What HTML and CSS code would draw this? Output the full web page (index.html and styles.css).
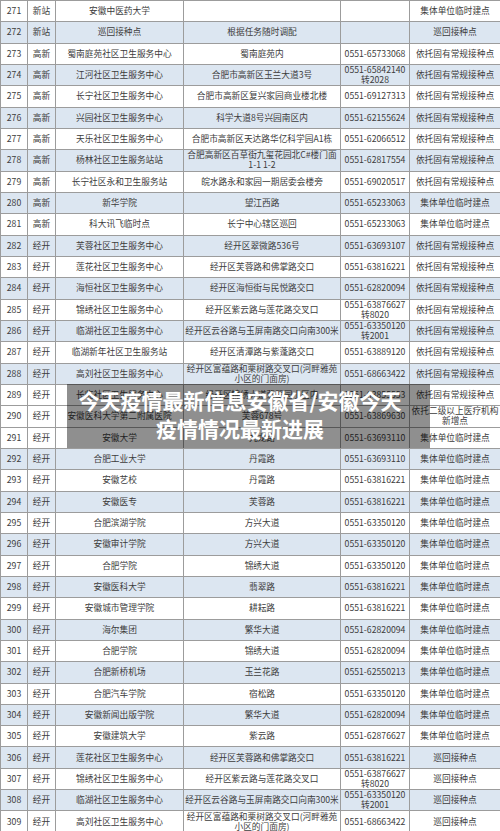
FILE: index.html
```html
<!DOCTYPE html>
<html lang="zh-CN">
<head>
<meta charset="utf-8">
<title>今天疫情最新信息安徽省/安徽今天疫情情况最新进展</title>
<link rel="stylesheet" href="styles.css">
</head>
<body>
<div class="page">
<table class="sites">
<colgroup>
<col class="c-no"><col class="c-area"><col class="c-name"><col class="c-addr"><col class="c-tel"><col class="c-type">
</colgroup>
<tbody>
<tr><td>271</td><td>新站</td><td>安徽中医药大学</td><td></td><td></td><td>集体单位临时建点</td></tr>
<tr class="alt"><td>272</td><td>新站</td><td>巡回接种点</td><td>根据任务随时调配</td><td></td><td>巡回接种点</td></tr>
<tr><td>273</td><td>高新</td><td>蜀南庭苑社区卫生服务中心</td><td>蜀南庭苑内</td><td>0551-65733068</td><td>依托固有常规接种点</td></tr>
<tr class="alt"><td>274</td><td>高新</td><td>江河社区卫生服务中心</td><td>合肥市高新区玉兰大道3号</td><td>0551-65842140<br>转2028</td><td>依托固有常规接种点</td></tr>
<tr><td>275</td><td>高新</td><td>长宁社区卫生服务中心</td><td>合肥市高新区复兴家园商业楼北楼</td><td>0551-69127313</td><td>依托固有常规接种点</td></tr>
<tr class="alt"><td>276</td><td>高新</td><td>兴园社区卫生服务中心</td><td>科学大道8号兴园南区内</td><td>0551-62155624</td><td>依托固有常规接种点</td></tr>
<tr><td>277</td><td>高新</td><td>天乐社区卫生服务中心</td><td>合肥市高新区天达路华亿科学园A1栋</td><td>0551-62066512</td><td>依托固有常规接种点</td></tr>
<tr class="alt"><td>278</td><td>高新</td><td>杨林社区卫生服务站站</td><td>合肥高新区百草街九玺花园北C#楼门面<br>1-1 1-2</td><td>0551-62817554</td><td>依托固有常规接种点</td></tr>
<tr><td>279</td><td>高新</td><td>长宁社区永和卫生服务站</td><td>皖水路永和家园一期居委会楼旁</td><td>0551-69020517</td><td>依托固有常规接种点</td></tr>
<tr class="alt"><td>280</td><td>高新</td><td>新华学院</td><td>望江西路</td><td>0551-65233063</td><td>集体单位临时建点</td></tr>
<tr><td>281</td><td>高新</td><td>科大讯飞临时点</td><td>长宁中心辖区巡回</td><td>0551-65233063</td><td>集体单位临时建点</td></tr>
<tr class="alt"><td>282</td><td>经开</td><td>芙蓉社区卫生服务中心</td><td>经开区翠微路536号</td><td>0551-63693107</td><td>依托固有常规接种点</td></tr>
<tr><td>283</td><td>经开</td><td>莲花社区卫生服务中心</td><td>经开区芙蓉路和佛掌路交口</td><td>0551-63816221</td><td>依托固有常规接种点</td></tr>
<tr class="alt"><td>284</td><td>经开</td><td>海恒社区卫生服务中心</td><td>经开区海恒街与民悦路交口</td><td>0551-62820094</td><td>依托固有常规接种点</td></tr>
<tr><td>285</td><td>经开</td><td>锦绣社区卫生服务中心</td><td>经开区紫云路与莲花路交叉口</td><td>0551-63876627<br>转8020</td><td>依托固有常规接种点</td></tr>
<tr class="alt"><td>286</td><td>经开</td><td>临湖社区卫生服务中心</td><td>经开区云谷路与玉屏南路交口向南300米</td><td>0551-63350120<br>转2001</td><td>依托固有常规接种点</td></tr>
<tr><td>287</td><td>经开</td><td>临湖新年社区卫生服务站</td><td>经开区清潭路与紫蓬路交口</td><td>0551-63889120</td><td>依托固有常规接种点</td></tr>
<tr class="alt"><td>288</td><td>经开</td><td>高刘社区卫生服务中心</td><td>经开区富蕴路和栗树路交叉口(河畔雅苑<br>小区的门面房)</td><td>0551-68663422</td><td>依托固有常规接种点</td></tr>
<tr><td>289</td><td>经开</td><td>长临社区卫生服务中心</td><td>经开区锦绣大道翡翠园小区内</td><td>0551-63855553</td><td>依托固有常规接种点</td></tr>
<tr><td>290</td><td>经开</td><td>安徽医科大学第二附属医院</td><td>芙蓉678号</td><td>0551-63869630</td><td>依托二级以上医疗机构<br>新增点</td></tr>
<tr><td>291</td><td>经开</td><td>安徽大学</td><td>九龙路</td><td>0551-63693110</td><td>集体单位临时建点</td></tr>
<tr class="alt"><td>292</td><td>经开</td><td>合肥工业大学</td><td>丹霞路</td><td>0551-63693110</td><td>集体单位临时建点</td></tr>
<tr><td>293</td><td>经开</td><td>安徽艺校</td><td>丹霞路</td><td>0551-63816221</td><td>集体单位临时建点</td></tr>
<tr class="alt"><td>294</td><td>经开</td><td>安徽医专</td><td>芙蓉路</td><td>0551-63816221</td><td>集体单位临时建点</td></tr>
<tr><td>295</td><td>经开</td><td>合肥滨湖学院</td><td>方兴大道</td><td>0551-63350120</td><td>集体单位临时建点</td></tr>
<tr class="alt"><td>296</td><td>经开</td><td>安徽审计学院</td><td>方兴大道</td><td>0551-63350120</td><td>集体单位临时建点</td></tr>
<tr><td>297</td><td>经开</td><td>合肥学院</td><td>锦绣大道</td><td>0551-63350120</td><td>集体单位临时建点</td></tr>
<tr class="alt"><td>298</td><td>经开</td><td>安徽医科大学</td><td>翡翠路</td><td>0551-63816221</td><td>集体单位临时建点</td></tr>
<tr><td>299</td><td>经开</td><td>安徽城市管理学院</td><td>耕耘路</td><td>0551-63816221</td><td>集体单位临时建点</td></tr>
<tr class="alt"><td>300</td><td>经开</td><td>海尔集团</td><td>繁华大道</td><td>0551-62820094</td><td>集体单位临时建点</td></tr>
<tr><td>301</td><td>经开</td><td>合肥学院</td><td>锦绣大道</td><td>0551-62820094</td><td>集体单位临时建点</td></tr>
<tr class="alt"><td>302</td><td>经开</td><td>合肥新桥机场</td><td>玉兰花路</td><td>0551-62550213</td><td>集体单位临时建点</td></tr>
<tr><td>303</td><td>经开</td><td>合肥汽车学院</td><td>宿松路</td><td>0551-63350120</td><td>集体单位临时建点</td></tr>
<tr class="alt"><td>304</td><td>经开</td><td>安徽新闻出版学院</td><td>繁华大道</td><td>0551-62820094</td><td>集体单位临时建点</td></tr>
<tr><td>305</td><td>经开</td><td>安徽建筑大学</td><td>紫云路</td><td>0551-62876627</td><td>集体单位临时建点</td></tr>
<tr class="alt"><td>306</td><td>经开</td><td>莲花社区卫生服务中心</td><td>经开区芙蓉路和佛掌路交口</td><td>0551-63816221</td><td>巡回接种点</td></tr>
<tr><td>307</td><td>经开</td><td>锦绣社区卫生服务中心</td><td>经开区紫云路与莲花路交叉口</td><td>0551-63876627<br>转8020</td><td>巡回接种点</td></tr>
<tr class="alt"><td>308</td><td>经开</td><td>临湖社区卫生服务中心</td><td>经开区云谷路与玉屏南路交口向南300米</td><td>0551-63350120<br>转2001</td><td>巡回接种点</td></tr>
<tr><td>309</td><td>经开</td><td>高刘社区卫生服务中心</td><td>经开区富蕴路和栗树路交叉口(河畔雅苑<br>小区的门面房)</td><td>0551-68663422</td><td>巡回接种点</td></tr>
</tbody>
</table>
<div class="caption">
<p class="caption-text">今天疫情最新信息安徽省/安徽今天<br>疫情情况最新进展</p>
</div>
</div>
</body>
</html>
```
FILE: styles.css
```css
html, body {
  margin: 0;
  padding: 0;
  background: #ffffff;
}

.page {
  position: relative;
  width: 500px;
  height: 831px;
  overflow: hidden;
}

.sites {
  width: 500px;
  table-layout: fixed;
  border-collapse: collapse;
  font-family: "Noto Sans CJK SC", "Noto Sans", sans-serif;
  font-size: 8.7px;
  line-height: 10px;
  color: #3c3c3c;
}

.c-no { width: 27px; }
.c-area { width: 28px; }
.c-name { width: 128px; }
.c-addr { width: 157px; }
.c-tel { width: 69px; }
.c-type { width: 91px; }

.sites tr {
  height: 21.33px;
  background: #ffffff;
}

.sites tr.alt {
  background: #dce6f1;
}

.sites td {
  border: 1px solid #9c9c9c;
  padding: 0;
  text-align: center;
  vertical-align: middle;
  white-space: nowrap;
  overflow: hidden;
}

.caption {
  position: absolute;
  left: 67px;
  top: 384px;
  width: 363px;
  height: 64px;
  background: rgba(0, 0, 0, 0.44);
  display: flex;
  align-items: center;
  justify-content: center;
  padding-right: 17px;
  padding-bottom: 4px;
  box-sizing: border-box;
}

.caption-text {
  margin: 0;
  font-family: "Noto Sans CJK SC", "Noto Sans", sans-serif;
  font-weight: 700;
  font-size: 21px;
  line-height: 28px;
  color: #ffffff;
  text-align: center;
  white-space: nowrap;
}
```
